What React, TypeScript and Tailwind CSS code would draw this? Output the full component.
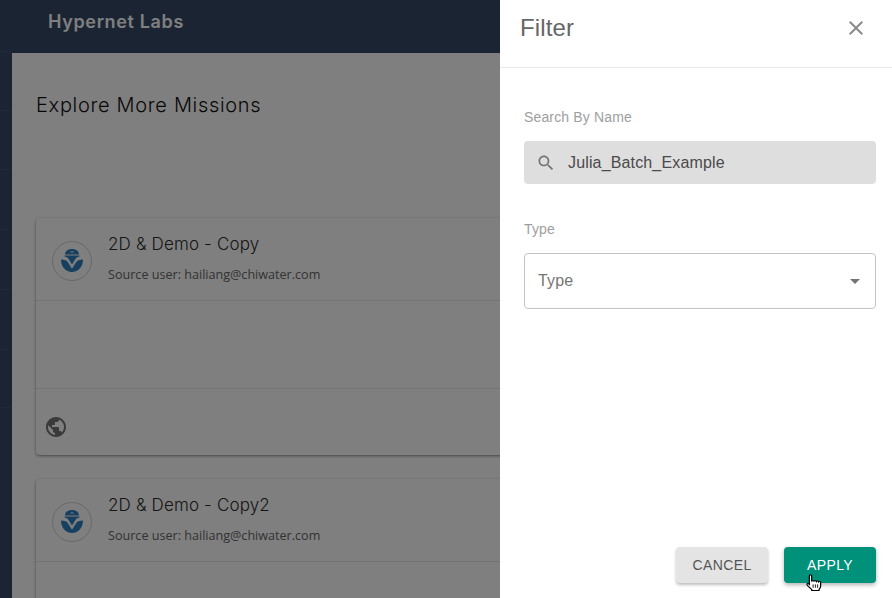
function Globe() {
  return (
    <svg viewBox="0 0 24 24" className="w-6 h-6 fill-[#757575]">
      <path d="M12 2C6.48 2 2 6.48 2 12s4.48 10 10 10 10-4.48 10-10S17.52 2 12 2zm-1 17.93c-3.95-.49-7-3.85-7-7.93 0-.62.08-1.21.21-1.79L9 15v1c0 1.1.9 2 2 2v1.93zm6.9-2.54c-.26-.81-1-1.39-1.9-1.39h-1v-3c0-.55-.45-1-1-1H8v-2h2c.55 0 1-.45 1-1V7h2c1.1 0 2-.9 2-2v-.41c2.93 1.19 5 4.06 5 7.41 0 2.08-.8 3.97-2.1 5.39z" />
    </svg>
  );
}

function Logo() {
  return (
    <div className="w-10 h-10 rounded-full border border-[#d0d0d0] flex items-center justify-center shrink-0">
      <svg viewBox="0 0 24 24" className="w-6 h-6 fill-[#2f7fc0]">
        <path d="M5 5.500C5 2.200 8 0 12 0s7 2.200 7 5.500zM10.500 3.400h3v-1h-3z" fillRule="evenodd" />
        <path d="M4.500 6.500h15v.9c-1.700.3-3 .9-3.800 2L12 15.500 8.300 9.400C7.500 8.300 6.200 7.700 4.500 7.400z" />
        <path d="M1 10.500c3.800 0 6 1.200 7.200 3.200l3.800 6V23C5.800 23 1 18 1 10.500z" />
        <path d="M23 10.500c-3.800 0-6 1.200-7.200 3.200l-3.800 6V23c6.200 0 11-5 11-12.500z" />
      </svg>
    </div>
  );
}

function MissionCard({ name }: { name: string }) {
  return (
    <div className="bg-white rounded shadow-[0_1px_3px_rgba(0,0,0,0.45)] mb-6 shrink-0">
      <div className="h-[83px] flex items-start px-4 pt-[13px] border-b border-[#e6e6e6]">
        <div className="mt-[10px]">
          <Logo />
        </div>
        <div className="ml-4">
          <div className="text-[17px] leading-[26px] tracking-[0.15px] text-[#2c2c2c] font-['Inter',sans-serif] font-light">
            {name}
          </div>
          <div className="text-[12.6px] leading-[18px] mt-[9px] text-[#666] font-['Open_Sans',sans-serif]">
            Source user: hailiang@chiwater.com
          </div>
        </div>
      </div>
      <div className="h-[88px] border-b border-[#e6e6e6]"></div>
      <div className="h-[66px] flex items-start px-2 pt-[26px]">
        <Globe />
      </div>
    </div>
  );
}

function FilterDrawer() {
  return (
    <aside className="absolute top-0 right-0 bottom-0 w-[392px] bg-white flex flex-col font-['Liberation_Sans',sans-serif] tracking-[0.15px]">
      <div className="h-[68px] border-b border-[#e8e8e8] flex items-start justify-between pl-5 pr-6 pt-[12px] shrink-0">
        <h2 className="text-[24px] leading-[32px] text-[#666]">Filter</h2>
        <svg viewBox="0 0 24 24" className="w-6 h-6 mt-1 fill-[#8a8a8a]">
          <path d="M19 6.41L17.59 5 12 10.59 6.41 5 5 6.41 10.59 12 5 17.59 6.41 19 12 13.41 17.59 19 19 17.59 13.41 12z" />
        </svg>
      </div>

      <div className="flex-1 pl-6 pr-4 pt-[39px]">
        <label className="block text-[14px] leading-[20px] text-[#9e9e9e]">Search By Name</label>
        <div className="mt-[14px] h-[43px] bg-[#dedede] rounded flex items-center pl-3">
          <svg viewBox="0 0 24 24" className="w-5 h-5 fill-[#757575]">
            <path d="M15.5 14h-.79l-.28-.27C15.41 12.59 16 11.11 16 9.5 16 5.91 13.09 3 9.5 3S3 5.91 3 9.5 5.91 16 9.5 16c1.61 0 3.09-.59 4.23-1.57l.27.28v.79l5 4.99L20.49 19l-4.99-5zm-6 0C7.01 14 5 11.99 5 9.5S7.01 5 9.5 5 14 7.01 14 9.5 11.99 14 9.5 14z" />
          </svg>
          <span className="ml-3 text-[16px] text-[#4a4a4a]">Julia_Batch_Example</span>
        </div>

        <label className="block mt-[35px] text-[14px] leading-[20px] text-[#9e9e9e]">Type</label>
        <div className="mt-[14px] h-[56px] border border-[#c4c4c4] rounded flex items-center justify-between pl-[13px] pr-2">
          <span className="text-[16px] text-[#757575]">Type</span>
          <svg viewBox="0 0 24 24" className="w-6 h-6 fill-[#757575]">
            <path d="M7 10l5 5 5-5z" />
          </svg>
        </div>
      </div>

      <div className="flex justify-end gap-4 px-4 pb-[15px] shrink-0 relative">
        <button className="w-[92px] h-9 rounded bg-[#e4e4e4] text-[14px] tracking-[0.4px] text-[#555] shadow-[0_2px_3px_rgba(0,0,0,0.25)]">
          CANCEL
        </button>
        <button className="w-[92px] h-9 rounded bg-[#00917a] text-[14px] tracking-[0.4px] text-white shadow-[0_2px_4px_rgba(0,0,0,0.3)]">
          APPLY
        </button>
        {/* mouse pointer caught in the shot */}
        <svg viewBox="0 0 16 19" preserveAspectRatio="none" className="absolute left-[305px] top-[27px] w-5 h-[18px]">
          <path
            d="M3.500 1.800c0-1 1.800-1 1.800 0v6c.2-.9 1.700-.9 1.900 0 .2-.8 1.700-.8 1.900.1.300-.7 1.700-.6 1.800.3 .3-.5 1.500-.4 1.600.5v4.300c0 1.500-.8 2.400-1.300 3.500v.9H5.400v-.9c-1-1.400-2.500-3-3.700-5-.6-1 .5-1.900 1.300-1.100l.5.600z"
            fill="#fff"
            stroke="#000"
            strokeWidth="1"
          />
          <path d="M6.500 11v3.500M8.300 11v3.500M10.100 11v3.500" stroke="#000" strokeWidth="0.800" />
        </svg>
      </div>
    </aside>
  );
}

export default function App() {
  return (
    <div className="relative w-[892px] h-[598px] overflow-hidden flex bg-white">
      <div className="w-3 bg-[#344866] shrink-0">
        <div className="h-[52px] border-b border-[#3e526e]"></div>
        <div className="h-[59px] border-b border-[#3e526e]"></div>
        <div className="h-[59px] border-b border-[#3e526e]"></div>
        <div className="h-[60px] border-b border-[#3e526e]"></div>
        <div className="h-[60px] border-b border-[#3e526e]"></div>
        <div className="h-[60px] border-b border-[#3e526e]"></div>
        <div className="h-[58px] border-b border-[#3e526e]"></div>
      </div>

      <div className="flex-1 min-w-0 flex flex-col">
        <header className="h-[53px] bg-[#344866] pl-9 pt-[8px] shrink-0">
          <span className="text-[18px] leading-[28px] tracking-[0.65px] font-semibold text-white font-['Inter',sans-serif]">
            Hypernet Labs
          </span>
        </header>
        <main className="flex-1 min-h-0 overflow-hidden pl-6 pr-6 pt-[38px] flex flex-col">
          <h1 className="text-[20px] leading-[28px] tracking-[0.68px] text-[#111] font-light font-['Inter',sans-serif] mb-[99px]">
            Explore More Missions
          </h1>
          <MissionCard name="2D & Demo - Copy" />
          <MissionCard name="2D & Demo - Copy2" />
        </main>
      </div>

      <div className="absolute inset-0 bg-black/50"></div>
      <FilterDrawer />
    </div>
  );
}
